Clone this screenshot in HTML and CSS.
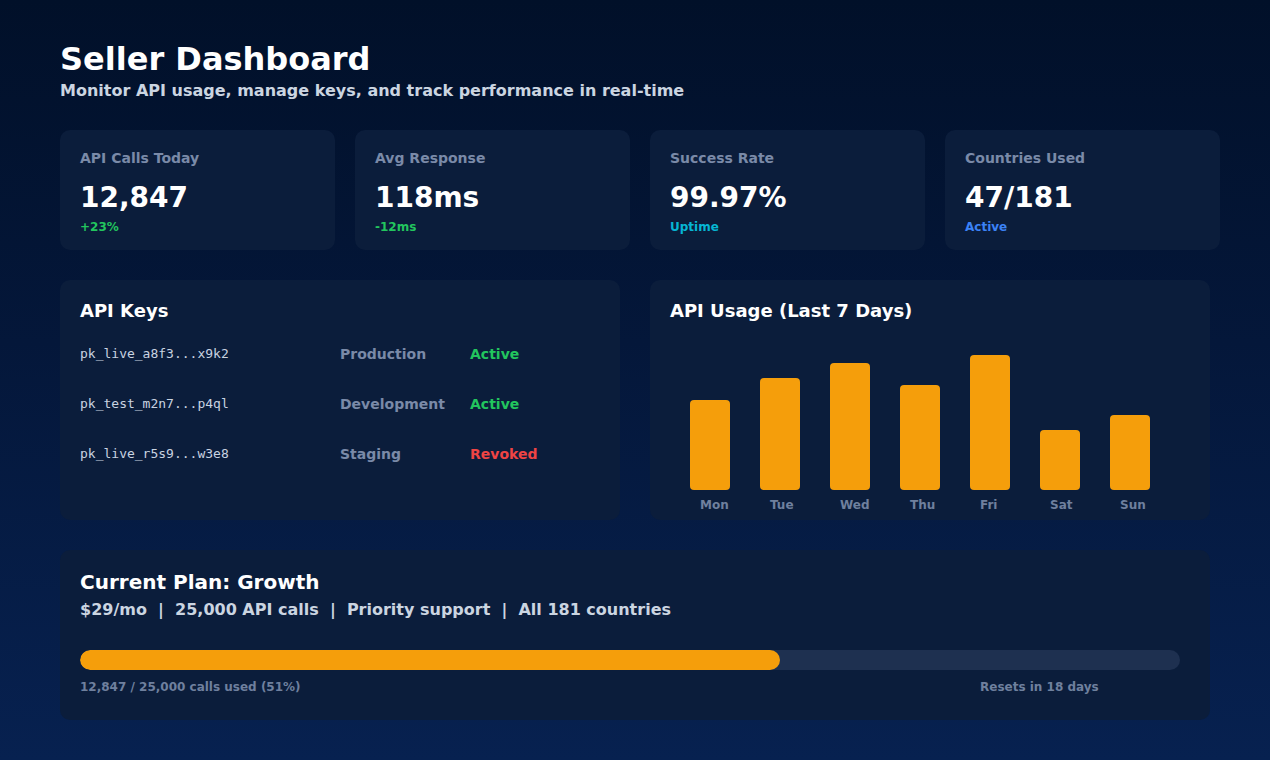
FILE: index.html
```html
<!DOCTYPE html>
<html lang="en">
<head>
<meta charset="utf-8">
<title>Seller Dashboard</title>
<link rel="stylesheet" href="styles.css">
</head>
<body>
<main class="page">
  <header class="header">
    <h1 class="title">Seller Dashboard</h1>
    <p class="subtitle">Monitor API usage, manage keys, and track performance in real-time</p>
  </header>

  <section class="stats">
    <div class="stat">
      <div class="stat-label">API Calls Today</div>
      <div class="stat-value">12,847</div>
      <div class="stat-sub green">+23%</div>
    </div>
    <div class="stat">
      <div class="stat-label">Avg Response</div>
      <div class="stat-value">118ms</div>
      <div class="stat-sub green">-12ms</div>
    </div>
    <div class="stat">
      <div class="stat-label">Success Rate</div>
      <div class="stat-value">99.97%</div>
      <div class="stat-sub cyan">Uptime</div>
    </div>
    <div class="stat">
      <div class="stat-label">Countries Used</div>
      <div class="stat-value">47/181</div>
      <div class="stat-sub blue">Active</div>
    </div>
  </section>

  <section class="middle">
    <div class="panel">
      <h2 class="panel-title">API Keys</h2>
      <div class="keys">
        <div class="key-row">
          <span class="key">pk_live_a8f3...x9k2</span>
          <span class="env">Production</span>
          <span class="status green">Active</span>
        </div>
        <div class="key-row">
          <span class="key">pk_test_m2n7...p4ql</span>
          <span class="env">Development</span>
          <span class="status green">Active</span>
        </div>
        <div class="key-row">
          <span class="key">pk_live_r5s9...w3e8</span>
          <span class="env">Staging</span>
          <span class="status red">Revoked</span>
        </div>
      </div>
    </div>

    <div class="panel">
      <h2 class="panel-title">API Usage (Last 7 Days)</h2>
      <div class="chart">
        <div class="col"><div class="bar" style="height:90px"></div><span class="day">Mon</span></div>
        <div class="col"><div class="bar" style="height:112px"></div><span class="day">Tue</span></div>
        <div class="col"><div class="bar" style="height:127px"></div><span class="day">Wed</span></div>
        <div class="col"><div class="bar" style="height:105px"></div><span class="day">Thu</span></div>
        <div class="col"><div class="bar" style="height:135px"></div><span class="day">Fri</span></div>
        <div class="col"><div class="bar" style="height:60px"></div><span class="day">Sat</span></div>
        <div class="col"><div class="bar" style="height:75px"></div><span class="day">Sun</span></div>
      </div>
    </div>
  </section>

  <section class="panel plan">
    <h2 class="plan-title">Current Plan: Growth</h2>
    <p class="plan-details">$29/mo  |  25,000 API calls  |  Priority support  |  All 181 countries</p>
    <div class="track"><div class="fill" style="width:700px"></div></div>
    <div class="plan-foot">
      <span>12,847 / 25,000 calls used (51%)</span>
      <span>Resets in 18 days</span>
    </div>
  </section>
</main>
</body>
</html>
```

FILE: styles.css
```css
* { box-sizing: border-box; }

html, body {
  margin: 0;
  padding: 0;
}

body {
  width: 1270px;
  height: 760px;
  overflow: hidden;
  background: linear-gradient(180deg, #011029 0%, #04173a 45%, #072150 100%);
  font-family: "DejaVu Sans", "Liberation Sans", sans-serif;
  color: #ffffff;
}

.page {
  padding: 39px 50px 0 60px;
}

.title {
  margin: 0;
  font-size: 32px;
  line-height: 40px;
  font-weight: 700;
  color: #ffffff;
}

.subtitle {
  margin: 2px 0 0;
  font-size: 16px;
  line-height: 20px;
  font-weight: 700;
  color: #cbd5e1;
}

.stats {
  margin-top: 29px;
  display: grid;
  grid-template-columns: repeat(4, 275px);
  gap: 20px;
}

.stat {
  height: 120px;
  padding: 19px 20px 0;
  background: #0b1d3b;
  border-radius: 10px;
}

.stat-label {
  font-size: 14px;
  line-height: 18px;
  font-weight: 700;
  color: #7a8aa8;
}

.stat-value {
  margin-top: 15px;
  font-size: 28px;
  line-height: 32px;
  font-weight: 700;
  color: #ffffff;
}

.stat-sub {
  margin-top: 6px;
  font-size: 12px;
  line-height: 14px;
  font-weight: 700;
}

.green { color: #22c55e; }
.cyan { color: #06b6d4; }
.blue { color: #3b82f6; }
.red { color: #ef4444; }

.middle {
  margin-top: 30px;
  display: grid;
  grid-template-columns: 560px 560px;
  gap: 30px;
}

.panel {
  background: #0b1d3b;
  border-radius: 10px;
  padding: 20px;
}

.middle .panel {
  height: 240px;
}

.panel-title {
  margin: 0;
  font-size: 18px;
  line-height: 22px;
  font-weight: 700;
  color: #ffffff;
}

.keys {
  margin-top: 22px;
}

.key-row {
  display: grid;
  grid-template-columns: 260px 130px auto;
  height: 50px;
  align-items: start;
  line-height: 20px;
}

.key {
  font-family: "DejaVu Sans Mono", "Liberation Mono", monospace;
  font-size: 13px;
  color: #c9d3e1;
}

.env {
  font-size: 14px;
  font-weight: 700;
  color: #7a8aa8;
}

.status {
  font-size: 14px;
  font-weight: 700;
}

.chart {
  height: 191px;
  padding-left: 20px;
  display: flex;
  align-items: flex-end;
  gap: 30px;
}

.col {
  width: 40px;
  display: flex;
  flex-direction: column;
}

.bar {
  width: 40px;
  background: #f59e0b;
  border-radius: 4px;
}

.day {
  margin-top: 7px;
  padding-left: 10px;
  font-size: 12px;
  line-height: 16px;
  font-weight: 700;
  color: #6f809e;
  white-space: nowrap;
}

.plan {
  margin-top: 30px;
  width: 1150px;
  height: 170px;
}

.plan-title {
  margin: 0;
  font-size: 20px;
  line-height: 24px;
  font-weight: 700;
  color: #ffffff;
}

.plan-details {
  margin: 6px 0 0;
  font-size: 16px;
  line-height: 20px;
  font-weight: 700;
  color: #cbd5e1;
  white-space: pre;
}

.track {
  margin-top: 30px;
  width: 1100px;
  height: 20px;
  border-radius: 10px;
  background: #1e3050;
  overflow: hidden;
}

.fill {
  height: 100%;
  background: #f59e0b;
  border-radius: 10px;
}

.plan-foot {
  margin-top: 9px;
  display: grid;
  grid-template-columns: 900px auto;
  font-size: 12px;
  line-height: 16px;
  font-weight: 700;
  color: #6f809e;
}
```
